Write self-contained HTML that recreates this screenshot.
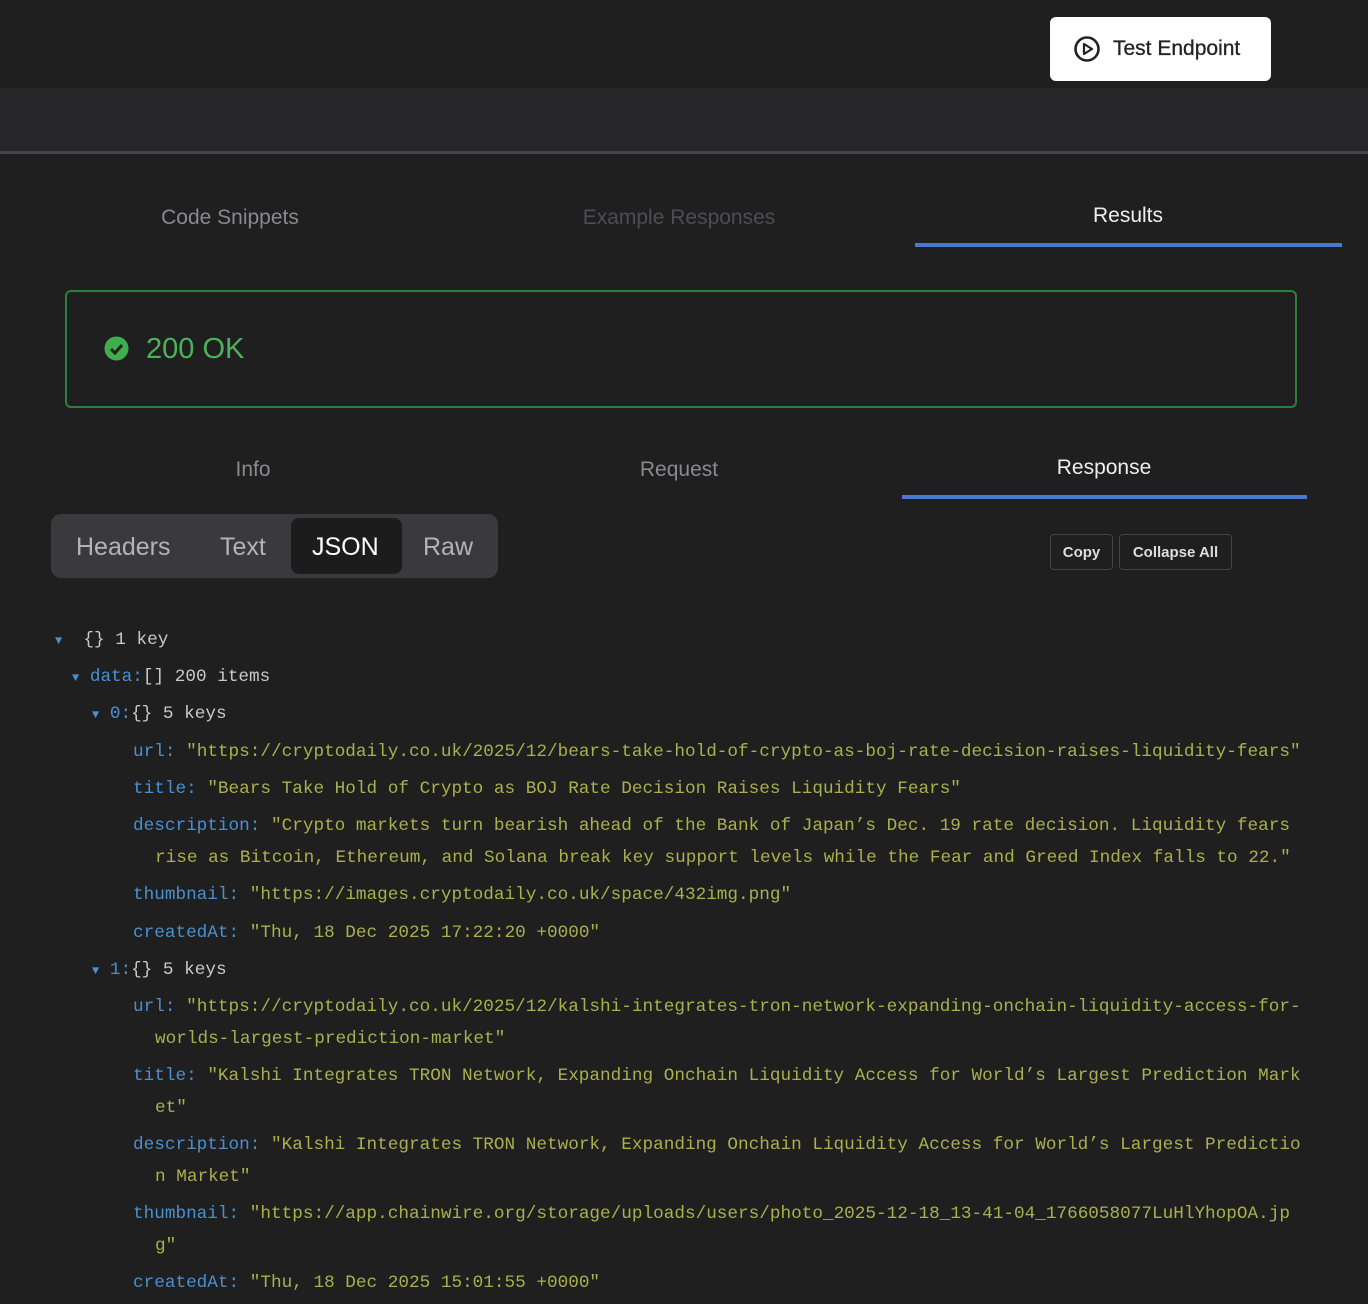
<!DOCTYPE html>
<html><head><meta charset="utf-8"><style>
*{margin:0;padding:0;box-sizing:border-box}
body{width:1368px;height:1304px;background:#1f1f1f;font-family:"Liberation Sans",sans-serif;position:relative;overflow:hidden}
.a{position:absolute}
.band{left:0;top:88px;width:1368px;height:66px;background:#262628;border-bottom:3px solid #45454a}
.btn{left:1050px;top:17px;width:221px;height:64px;background:#fff;border-radius:6px;color:#222;font-size:21px;display:flex;align-items:center;padding-left:23px;gap:12px;-webkit-text-stroke:0.3px #222}
.tab{font-size:21px;text-align:center;width:300px}
.j{font-family:"Liberation Mono",monospace;font-size:17.7px;line-height:32px;height:32px;white-space:pre;color:#c9c9c9}
.k{color:#4a90d0}.s{color:#a9b04c}.t{color:#4a90d0;font-size:12px}
.sb{border:1px solid #444;border-radius:4px;color:#ddd;font-size:15px;font-weight:bold;height:36px;display:flex;align-items:center;justify-content:center;top:534px}
</style></head><body>
<div class="a btn"><svg width="28" height="28" viewBox="0 0 28 28"><circle cx="14" cy="14" r="11.5" fill="none" stroke="#222" stroke-width="2.6"/><path d="M11 9v10l8-5z" fill="none" stroke="#222" stroke-width="2.2" stroke-linejoin="round"/></svg>Test Endpoint</div>
<div class="a band"></div>
<div class="a tab" style="left:80px;top:206px;color:#8a8a8e">Code Snippets</div>
<div class="a tab" style="left:529px;top:206px;color:#4d4d52">Example Responses</div>
<div class="a tab" style="left:978px;top:204px;color:#eee">Results</div>
<div class="a" style="left:915px;top:243px;width:427px;height:4px;background:#4a78d0"></div>
<div class="a" style="left:65px;top:290px;width:1232px;height:118px;border:2px solid #2e7d3a;border-radius:6px"></div>
<svg class="a" style="left:104px;top:336px" width="25" height="25" viewBox="0 0 25 25"><circle cx="12.5" cy="12.5" r="12" fill="#3fae4f"/><path d="M7 13l4 4 7-8" fill="none" stroke="#1f1f1f" stroke-width="3"/></svg>
<div class="a" style="left:146px;top:333px;font-size:29px;color:#4cb25a">200 OK</div>
<div class="a tab" style="left:103px;top:458px;color:#8a8a8e">Info</div>
<div class="a tab" style="left:529px;top:458px;color:#8a8a8e">Request</div>
<div class="a tab" style="left:954px;top:456px;color:#eee">Response</div>
<div class="a" style="left:902px;top:495px;width:405px;height:4px;background:#4a78d0"></div>
<div class="a" style="left:51px;top:514px;width:447px;height:64px;background:#3a3a3e;border-radius:10px"></div>
<div class="a" style="left:291px;top:518px;width:111px;height:56px;background:#1c1c1c;border-radius:8px"></div>
<div class="a" style="left:76px;top:533px;font-size:25px;color:#b4b4b8">Headers</div>
<div class="a" style="left:220px;top:533px;font-size:25px;color:#b4b4b8">Text</div>
<div class="a" style="left:312px;top:533px;font-size:25px;color:#fff">JSON</div>
<div class="a" style="left:423px;top:533px;font-size:25px;color:#b4b4b8">Raw</div>
<div class="a sb" style="left:1050px;width:63px">Copy</div>
<div class="a sb" style="left:1119px;width:113px">Collapse All</div>

<div class="a j" style="left:55px;top:624px"><span class="t">▼</span>  {} 1 key</div>
<div class="a j" style="left:72px;top:661px"><span class="t">▼</span> <span class="k">data:</span>[] 200 items</div>
<div class="a j" style="left:92px;top:698px"><span class="t">▼</span> <span class="k">0:</span>{} 5 keys</div>
<div class="a j" style="left:133px;top:736px"><span class="k">url:</span> <span class="s">"https://cryptodaily.co.uk/2025/12/bears-take-hold-of-crypto-as-boj-rate-decision-raises-liquidity-fears"</span></div>
<div class="a j" style="left:133px;top:773px"><span class="k">title:</span> <span class="s">"Bears Take Hold of Crypto as BOJ Rate Decision Raises Liquidity Fears"</span></div>
<div class="a j" style="left:133px;top:810px"><span class="k">description:</span> <span class="s">"Crypto markets turn bearish ahead of the Bank of Japan’s Dec. 19 rate decision. Liquidity fears</span></div>
<div class="a j" style="left:155px;top:842px"><span class="s">rise as Bitcoin, Ethereum, and Solana break key support levels while the Fear and Greed Index falls to 22."</span></div>
<div class="a j" style="left:133px;top:879px"><span class="k">thumbnail:</span> <span class="s">"https://images.cryptodaily.co.uk/space/432img.png"</span></div>
<div class="a j" style="left:133px;top:917px"><span class="k">createdAt:</span> <span class="s">"Thu, 18 Dec 2025 17:22:20 +0000"</span></div>
<div class="a j" style="left:92px;top:954px"><span class="t">▼</span> <span class="k">1:</span>{} 5 keys</div>
<div class="a j" style="left:133px;top:991px"><span class="k">url:</span> <span class="s">"https://cryptodaily.co.uk/2025/12/kalshi-integrates-tron-network-expanding-onchain-liquidity-access-for-</span></div>
<div class="a j" style="left:155px;top:1023px"><span class="s">worlds-largest-prediction-market"</span></div>
<div class="a j" style="left:133px;top:1060px"><span class="k">title:</span> <span class="s">"Kalshi Integrates TRON Network, Expanding Onchain Liquidity Access for World’s Largest Prediction Mark</span></div>
<div class="a j" style="left:155px;top:1092px"><span class="s">et"</span></div>
<div class="a j" style="left:133px;top:1129px"><span class="k">description:</span> <span class="s">"Kalshi Integrates TRON Network, Expanding Onchain Liquidity Access for World’s Largest Predictio</span></div>
<div class="a j" style="left:155px;top:1161px"><span class="s">n Market"</span></div>
<div class="a j" style="left:133px;top:1198px"><span class="k">thumbnail:</span> <span class="s">"https://app.chainwire.org/storage/uploads/users/photo_2025-12-18_13-41-04_1766058077LuHlYhopOA.jp</span></div>
<div class="a j" style="left:155px;top:1230px"><span class="s">g"</span></div>
<div class="a j" style="left:133px;top:1267px"><span class="k">createdAt:</span> <span class="s">"Thu, 18 Dec 2025 15:01:55 +0000"</span></div>
</body></html>
